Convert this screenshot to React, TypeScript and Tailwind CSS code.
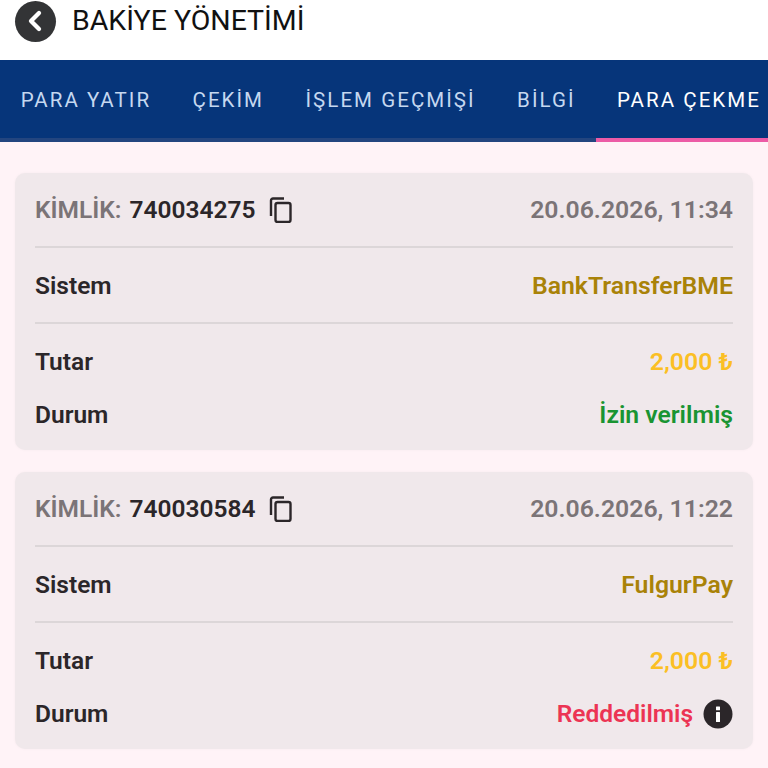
import { ChevronLeft } from "lucide-react";

type Entry = {
  id: string;
  date: string;
  system: string;
  status: string;
  statusClass: string;
  showInfo?: boolean;
};

const tabs = ["PARA YATIR", "ÇEKİM", "İŞLEM GEÇMİŞİ", "BİLGİ", "PARA ÇEKME"];

const entries: Entry[] = [
  { id: "740034275", date: "20.06.2026, 11:34", system: "BankTransferBME", status: "İzin verilmiş", statusClass: "text-[24.700px] text-[#1a9432]" },
  { id: "740030584", date: "20.06.2026, 11:22", system: "FulgurPay", status: "Reddedilmiş", statusClass: "text-[#ec3454]", showInfo: true },
];

function CopyIcon() {
  return (
    <svg width="24" height="26" viewBox="0 0 24 26" fill="none" stroke="#2b2629" strokeWidth="2.4">
      <path d="M2 19V3.500A2 2 0 0 1 4 1.500H15" />
      <rect x="6.500" y="6" width="15" height="19" rx="2" />
    </svg>
  );
}

function InfoIcon() {
  return (
    <svg width="30" height="30" viewBox="0 0 30 30">
      <circle cx="15" cy="15" r="14.500" fill="#2b2629" />
      <rect x="13" y="13" width="4" height="10" rx="0.500" fill="#fff" />
      <rect x="13" y="7.500" width="4" height="3.800" rx="0.500" fill="#fff" />
    </svg>
  );
}

function Card({ entry }: { entry: Entry }) {
  return (
    <div className="rounded-[10px] bg-[#f0e8eb] px-5 shadow-[0_0_3px_rgba(0,0,0,0.04)]">
      <div className="flex h-[75px] items-center justify-between border-b-2 border-[#dcd6d8] pt-[2px]">
        <div className="flex items-center">
          <span className="text-[#7b7477]">KİMLİK:</span>
          <span className="ml-[8px] text-[#2b2629]">{entry.id}</span>
          <span className="mt-[-1px] ml-[13px]">
            <CopyIcon />
          </span>
        </div>
        <span className="text-[24.800px] text-[#7b7477]">{entry.date}</span>
      </div>
      <div className="flex h-[76px] items-center justify-between border-b-2 border-[#dcd6d8] pt-[3px]">
        <span className="text-[#2b2629]">Sistem</span>
        <span className="text-[24.800px] text-[#a98208]">{entry.system}</span>
      </div>
      <div className="flex h-[76px] items-center justify-between">
        <span className="text-[#2b2629]">Tutar</span>
        <span className="text-[24.800px] text-[#fbbf24]">2,000 ₺</span>
      </div>
      <div className="flex h-[30px] items-center justify-between">
        <span className="text-[#2b2629]">Durum</span>
        <div className="flex items-center gap-[10px]">
          <span className={entry.statusClass}>{entry.status}</span>
          {entry.showInfo && <InfoIcon />}
        </div>
      </div>
      <div className="h-[20px]" />
    </div>
  );
}

export default function App() {
  return (
    <div className="h-[768px] w-[768px] overflow-hidden bg-[#fff3f7] font-['Roboto',sans-serif]">
      <header className="flex h-[60px] items-start bg-white pl-[15px]">
        <div className="flex items-center">
          <div className="flex h-[41px] w-[41px] items-center justify-center rounded-full bg-[#333436]">
            <ChevronLeft size={32} strokeWidth={3.200} className="mr-[2px] text-white" />
          </div>
          <h1 className="ml-[16px] text-[28.500px] font-normal text-[#111]">BAKİYE YÖNETİMİ</h1>
        </div>
      </header>

      <nav className="flex h-[82px] border-b-[4px] border-[#23457f] bg-[#06357a]">
        {tabs.map((tab, i) => (
          <div
            key={tab}
            className={`relative flex items-center px-[20.700px] pt-[2px] text-[20.500px] tracking-[2.050px] whitespace-nowrap ${
              i === 4 ? "text-white" : "text-[#c5d8f0]"
            }`}
          >
            {tab}
            {i === 4 && <div className="absolute right-[-30px] bottom-[-4px] left-0 h-[4px] bg-[#ec5ba6]" />}
          </div>
        ))}
      </nav>

      <main className="flex flex-col gap-[22px] px-[15px] pt-[31px] text-[24.500px] leading-none font-semibold">
        {entries.map((e) => (
          <Card key={e.id} entry={e} />
        ))}
      </main>
    </div>
  );
}
